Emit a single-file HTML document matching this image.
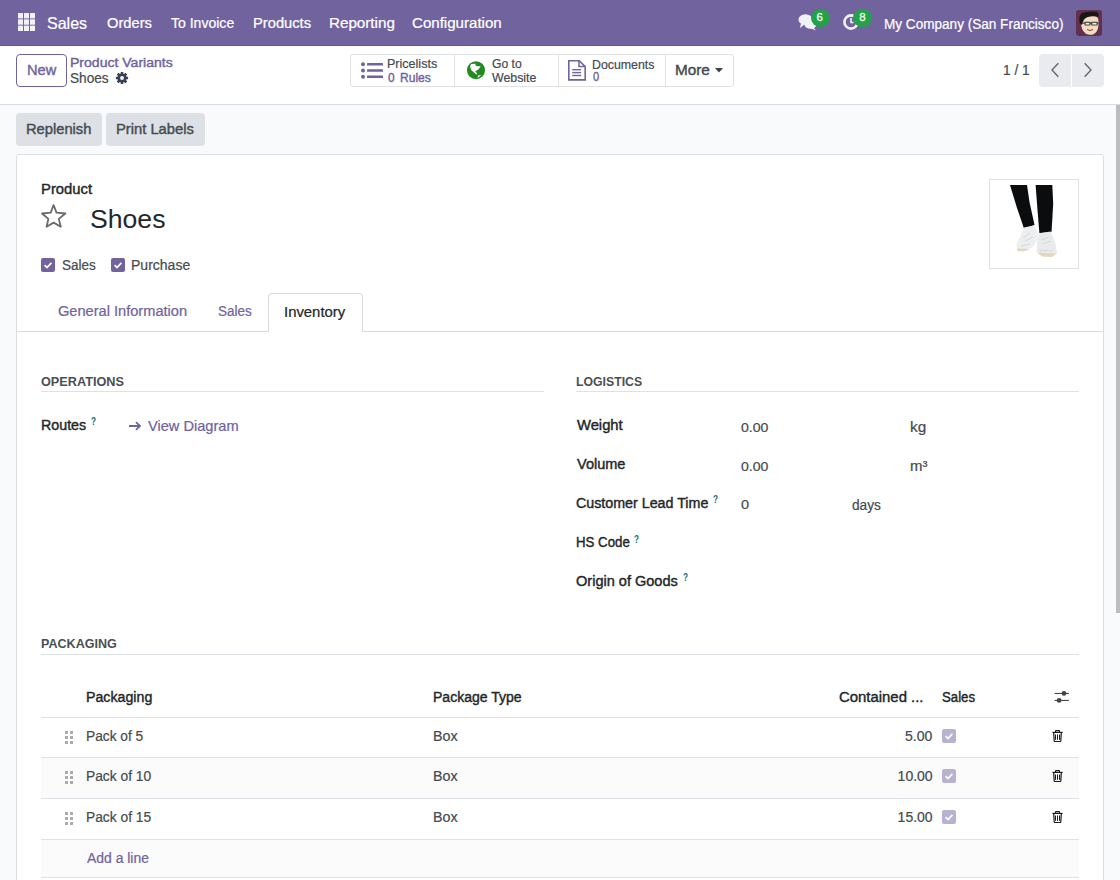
<!DOCTYPE html>
<html><head><meta charset="utf-8">
<style>
*{box-sizing:border-box;margin:0;padding:0}
html,body{width:1120px;height:880px;overflow:hidden;background:#f9fafb;font-family:"Liberation Sans",sans-serif;}
.t{position:absolute;line-height:1;white-space:nowrap;}
.a{position:absolute;}
#nav{left:0;top:0;width:1120px;height:46px;background:#71639e;}
#cp{left:0;top:46px;width:1120px;height:59px;background:#fff;border-bottom:1px solid #d8dadd;}
#btnnew{left:16px;top:54px;width:51px;height:33px;border:1px solid #71639e;border-radius:4px;background:#fff;}
#smart{left:350px;top:54px;width:384px;height:33px;border:1px solid #e0e2e5;border-radius:3px;background:#fff;}
.vdiv{position:absolute;top:55px;width:1px;height:31px;background:#e0e2e5;}
#pg1{left:1039px;top:54px;width:32px;height:33px;background:#e9ebee;border-radius:4px 0 0 4px;}
#pg2{left:1072px;top:54px;width:32px;height:33px;background:#e9ebee;border-radius:0 4px 4px 0;}
.gbtn{position:absolute;top:113px;height:33px;background:#dde1e5;border-radius:4px;}
#card{left:16px;top:154px;width:1088px;height:760px;background:#fff;border:1px solid #dcdee2;border-radius:3px;}
#scroll{left:1116px;top:105px;width:4px;height:508px;background:#bcbdbf;}
.hl{position:absolute;height:1px;background:#d8dadd;}
.hr{position:absolute;height:1px;background:#dee2e6;}
.cbx{position:absolute;width:14px;height:14px;border-radius:2px;background:#71639e;}
.cbd{position:absolute;width:14px;height:14px;border-radius:2px;background:#b9b1d0;}
.q{position:absolute;font-size:10.5px;line-height:1;color:#11707f;font-weight:700;transform:scaleX(0.78);transform-origin:0 0;}
</style></head><body>
<div class="a" id="nav"></div>
<div class="a" style="left:0;top:45px;width:1120px;height:1px;background:#62558e;"></div>
<!-- app grid icon -->
<svg class="a" style="left:18px;top:13px" width="18" height="19" viewBox="0 0 18 19"><g fill="#f3f1f8"><rect x="0" y="0.0" width="5" height="5.4"/><rect x="6" y="0.0" width="5" height="5.4"/><rect x="12" y="0.0" width="5" height="5.4"/><rect x="0" y="6.3" width="5" height="5.4"/><rect x="6" y="6.3" width="5" height="5.4"/><rect x="12" y="6.3" width="5" height="5.4"/><rect x="0" y="12.6" width="5" height="5.4"/><rect x="6" y="12.6" width="5" height="5.4"/><rect x="12" y="12.6" width="5" height="5.4"/></g></svg>
<!-- chat icon -->
<svg class="a" style="left:798px;top:13px" width="20" height="18" viewBox="0 0 20 18">
<g fill="#f3f1f8">
<ellipse cx="7.5" cy="6.5" rx="7" ry="5.3"/>
<path d="M3 10 L2 15 L7 11 Z"/>
<ellipse cx="12.5" cy="11.5" rx="6" ry="4.3"/>
<path d="M15 14 L18 17.5 L12 15 Z"/>
</g></svg>
<div class="a" style="left:811px;top:9px;width:19px;height:18px;border-radius:9px;background:#24a249;"></div>
<div class="t" style="left:816.6px;top:12.3px;font-size:11.5px;font-weight:400;-webkit-text-stroke:0.3px #f0fff0;color:#f0fff0;">6</div>
<!-- activity icon -->
<svg class="a" style="left:843px;top:13px" width="18" height="18" viewBox="0 0 18 18">
<circle cx="8" cy="9" r="6.6" fill="none" stroke="#f3f1f8" stroke-width="2.6"/>
<path d="M8 5 V9.5 H10.5" fill="none" stroke="#f3f1f8" stroke-width="1.6"/>
</svg>
<div class="a" style="left:853px;top:9px;width:19px;height:18px;border-radius:9px;background:#24a249;"></div>
<div class="t" style="left:859.2px;top:12.3px;font-size:11.5px;font-weight:400;-webkit-text-stroke:0.3px #f0fff0;color:#f0fff0;">8</div>
<!-- avatar -->
<svg class="a" style="left:1076px;top:10px" width="26" height="26" viewBox="0 0 26 26">
<rect x="0" y="0" width="26" height="26" rx="3" fill="#62304c"/>
<path d="M5 12 Q4.5 7 7 6 L20 6 Q23 8 22.5 14 Q22.5 22 17 24.5 Q13 25.5 9.5 23.5 Q5 20 5 12 Z" fill="#f5dcc0"/>
<path d="M3.5 13 Q2.5 5 6 3 Q13 0.5 21 2 Q23.5 3 22 7 Q17 5.5 12 7 Q8 8 7 12 L6 15 Z" fill="#171717"/>
<g fill="#3a3a36"><rect x="8.5" y="11.8" width="6" height="3.8" rx="0.8"/><rect x="15.2" y="11.8" width="6.5" height="3.8" rx="0.8"/><rect x="6.5" y="12.5" width="16" height="1.2"/></g>
<rect x="9.6" y="12.8" width="3.8" height="1.8" fill="#e8e8e8"/><rect x="16.3" y="12.8" width="4.3" height="1.8" fill="#e8e8e8"/>
<path d="M11 19.5 Q14 21.5 17 19.5" fill="none" stroke="#5a3a30" stroke-width="0.9"/>
</svg>

<div class="a" id="cp"></div>
<div class="a" id="btnnew"></div>
<div class="a" id="smart"></div>
<div class="vdiv" style="left:454px"></div>
<div class="vdiv" style="left:558px"></div>
<div class="vdiv" style="left:665px"></div>
<!-- gear -->
<svg class="a" style="left:115px;top:71px" width="14" height="14" viewBox="0 0 14 14">
<g fill="#374151">
<circle cx="7" cy="7" r="4.6"/>
<rect x="5.7" y="0.9" width="2.6" height="12.2" rx="0.4"/>
<rect x="5.7" y="0.9" width="2.6" height="12.2" rx="0.4" transform="rotate(45 7 7)"/>
<rect x="5.7" y="0.9" width="2.6" height="12.2" rx="0.4" transform="rotate(90 7 7)"/>
<rect x="5.7" y="0.9" width="2.6" height="12.2" rx="0.4" transform="rotate(135 7 7)"/>
</g>
<circle cx="7" cy="7" r="1.9" fill="#fff"/>
</svg>
<!-- list icon -->
<svg class="a" style="left:361px;top:62px" width="22" height="17" viewBox="0 0 22 17">
<g fill="#71639e">
<circle cx="2" cy="2.2" r="2"/><circle cx="2" cy="8.5" r="2"/><circle cx="2" cy="14.8" r="2"/>
<rect x="6" y="1" width="16" height="2.6" rx="0.5"/><rect x="6" y="7.2" width="16" height="2.6" rx="0.5"/><rect x="6" y="13.5" width="16" height="2.6" rx="0.5"/>
</g></svg>
<!-- globe -->
<svg class="a" style="left:466px;top:61px" width="20" height="19" viewBox="0 0 20 19">
<circle cx="10" cy="9.2" r="9" fill="#218b22"/>
<path d="M4 5.2 L5.2 3.1 L9.8 2.7 L9.2 4.3 L11.3 5.2 L14.7 5.2 L12.6 8.3 L9.2 10.4 L11.3 12.6 L10.4 13.5 L5.2 8.9 Z" fill="#fff"/>
<path d="M12 14.4 L15.3 14.1 L11.6 16.9 Z" fill="#fff"/>
</svg>
<!-- document icon -->
<svg class="a" style="left:567px;top:59px" width="20" height="23" viewBox="0 0 20 23">
<path d="M1.8 1.8 H12.3 L18.2 7.7 V20.9 H1.8 Z" fill="none" stroke="#71639e" stroke-width="1.6" stroke-linejoin="miter"/>
<path d="M12 2 V7.4 H18" fill="none" stroke="#71639e" stroke-width="1.5"/>
<rect x="5.2" y="10" width="8.9" height="1.4" fill="#71639e"/>
<rect x="5.2" y="12.9" width="8.9" height="1.4" fill="#71639e"/>
<rect x="5.2" y="15.8" width="8.9" height="1.4" fill="#71639e"/>
</svg>
<!-- caret -->
<svg class="a" style="left:715px;top:68px" width="8" height="5" viewBox="0 0 8 5"><path d="M0 0 H8 L4 4.5 Z" fill="#374151"/></svg>
<div class="a" id="pg1"></div>
<div class="a" id="pg2"></div>
<svg class="a" style="left:1050px;top:62px" width="10" height="16" viewBox="0 0 10 16"><path d="M8.3 1.2 L2 8 L8.3 14.8" fill="none" stroke="#5f6670" stroke-width="1.35"/></svg>
<svg class="a" style="left:1083px;top:62px" width="10" height="16" viewBox="0 0 10 16"><path d="M1.7 1.2 L8 8 L1.7 14.8" fill="none" stroke="#5f6670" stroke-width="1.35"/></svg>

<div class="a" id="scroll"></div>
<div class="gbtn" style="left:16px;width:86px"></div>
<div class="gbtn" style="left:106px;width:99px"></div>

<div class="a" id="card"></div>
<!-- star -->
<svg class="a" style="left:40px;top:203px" width="27" height="27" viewBox="0 0 27 27">
<path d="M13.6 2 L16.5 9.6 L25.4 10.5 L18.8 15.9 L20.8 23.7 L13.6 19.6 L6.6 23.7 L8.4 15.9 L2 10.5 L10.7 9.6 Z" fill="none" stroke="#6a6a6a" stroke-width="1.8" stroke-linejoin="round"/>
</svg>
<div class="cbx" style="left:41px;top:258px"></div>
<div class="cbx" style="left:111px;top:258px"></div>
<svg class="a" style="left:41px;top:258px" width="14" height="14" viewBox="0 0 14 14"><path d="M3.6 7.2 L6 9.5 L10.4 4.8" fill="none" stroke="#fff" stroke-width="1.7"/></svg>
<svg class="a" style="left:111px;top:258px" width="14" height="14" viewBox="0 0 14 14"><path d="M3.6 7.2 L6 9.5 L10.4 4.8" fill="none" stroke="#fff" stroke-width="1.7"/></svg>

<!-- product image -->
<div class="a" style="left:989px;top:179px;width:90px;height:90px;border:1px solid #dee2e6;background:#fff;"></div>
<svg class="a" style="left:990px;top:180px" width="88" height="88" viewBox="0 0 88 88">
<path d="M20 5 L37 5 L39.5 22 L44.5 45 L34 48.5 L27 28 Z" fill="#0b0c0e"/>
<path d="M45.6 5 L62.3 5 L63.2 24 L61.5 52 L49.4 53 L47.5 30 Z" fill="#0b0c0e"/>
<path d="M34 47.5 L44 45.5 L47 51 L48 59 L43 67 L34 70.5 L27 70 L26.5 64 L30 57 Z" fill="#eceef0"/>
<path d="M49 53.5 L60.5 51.5 L63 57 L66 66 L67 73.5 L62 76.5 L52 76 L46.5 72 L47 63 Z" fill="#e9ebed"/>
<path d="M27 68.5 L40 69 L34 71.5 L27.5 71 Z" fill="#e3d8bd"/>
<path d="M47 72.5 L66.5 73.5 L62 77 L52 76.5 Z" fill="#e3d8bd"/>
<path d="M33 58 L40 53 M35 61 L43 57 M31 66 L40 64" stroke="#cfd2d6" stroke-width="0.8" fill="none"/>
<path d="M51 60 L59 57 M52 64 L61 61 M49 70 L63 71" stroke="#cfd2d6" stroke-width="0.8" fill="none"/>
</svg>

<!-- tabs -->
<div class="hl" style="left:17px;top:331px;width:1086px;"></div>
<div class="a" style="left:268px;top:293px;width:95px;height:39px;background:#fff;border:1px solid #d8dadd;border-bottom:none;border-radius:4px 4px 0 0;"></div>

<div class="hr" style="left:41px;top:391px;width:503px;"></div>
<div class="hr" style="left:576px;top:391px;width:503px;"></div>
<div class="q" style="left:90.8px;top:415.8px;">?</div>
<svg class="a" style="left:128px;top:421px" width="14" height="10" viewBox="0 0 14 10"><path d="M1 5 H12 M8 1.2 L12 5 L8 8.8" fill="none" stroke="#71639e" stroke-width="1.8"/></svg>
<div class="q" style="left:712.5px;top:494px;">?</div>
<div class="q" style="left:634.3px;top:533.8px;">?</div>
<div class="q" style="left:682.5px;top:572.2px;">?</div>

<div class="hr" style="left:41px;top:654px;width:1038px;"></div>
<!-- table -->
<div class="a" style="left:41px;top:758px;width:1038px;height:40px;background:#fbfbfc;"></div>
<div class="a" style="left:41px;top:840px;width:1038px;height:37px;background:#fbfbfc;"></div>
<div class="hr" style="left:41px;top:717px;width:1038px;"></div>
<div class="hr" style="left:41px;top:757px;width:1038px;"></div>
<div class="hr" style="left:41px;top:798px;width:1038px;"></div>
<div class="hr" style="left:41px;top:839px;width:1038px;"></div>
<div class="hr" style="left:41px;top:877px;width:1038px;"></div>
<!-- sliders icon -->
<svg class="a" style="left:1054px;top:691px" width="15" height="12" viewBox="0 0 15 12">
<g fill="#444"><rect x="0.6" y="1.9" width="14.2" height="1.1"/><rect x="0.6" y="8.9" width="14.2" height="1.1"/>
<circle cx="10" cy="2.45" r="2.4"/><circle cx="5.1" cy="9.45" r="2.4"/></g></svg>
<!-- drag handles, checkboxes, trash -->
<svg class="a" style="left:64px;top:731px" width="10" height="14" viewBox="0 0 10 14"><g fill="#a9abae"><rect x="1" y="0" width="3" height="3"/><rect x="6" y="0" width="3" height="3"/><rect x="1" y="5" width="3" height="3"/><rect x="6" y="5" width="3" height="3"/><rect x="1" y="10" width="3" height="3"/><rect x="6" y="10" width="3" height="3"/></g></svg>
<svg class="a" style="left:64px;top:771px" width="10" height="14" viewBox="0 0 10 14"><g fill="#a9abae"><rect x="1" y="0" width="3" height="3"/><rect x="6" y="0" width="3" height="3"/><rect x="1" y="5" width="3" height="3"/><rect x="6" y="5" width="3" height="3"/><rect x="1" y="10" width="3" height="3"/><rect x="6" y="10" width="3" height="3"/></g></svg>
<svg class="a" style="left:64px;top:812px" width="10" height="14" viewBox="0 0 10 14"><g fill="#a9abae"><rect x="1" y="0" width="3" height="3"/><rect x="6" y="0" width="3" height="3"/><rect x="1" y="5" width="3" height="3"/><rect x="6" y="5" width="3" height="3"/><rect x="1" y="10" width="3" height="3"/><rect x="6" y="10" width="3" height="3"/></g></svg>
<div class="cbd" style="left:942px;top:729px"></div>
<div class="cbd" style="left:942px;top:769px"></div>
<div class="cbd" style="left:942px;top:810px"></div>
<svg class="a" style="left:942px;top:729px" width="14" height="14" viewBox="0 0 14 14"><path d="M3.6 7.2 L6 9.5 L10.4 4.8" fill="none" stroke="#fff" stroke-width="1.7"/></svg>
<svg class="a" style="left:942px;top:769px" width="14" height="14" viewBox="0 0 14 14"><path d="M3.6 7.2 L6 9.5 L10.4 4.8" fill="none" stroke="#fff" stroke-width="1.7"/></svg>
<svg class="a" style="left:942px;top:810px" width="14" height="14" viewBox="0 0 14 14"><path d="M3.6 7.2 L6 9.5 L10.4 4.8" fill="none" stroke="#fff" stroke-width="1.7"/></svg>
<svg class="a" style="left:1052px;top:730px" width="11" height="12" viewBox="0 0 11 12"><g fill="none" stroke="#1a1a1a"><path d="M0.4 2.4 H10.6" stroke-width="1.2"/><path d="M3.5 2.2 V1.1 Q3.5 0.6 4.1 0.6 H6.9 Q7.5 0.6 7.5 1.1 V2.2" stroke-width="1.1"/><path d="M1.7 2.9 L2.2 11 Q2.3 11.5 2.8 11.5 H8.2 Q8.7 11.5 8.8 11 L9.3 2.9" stroke-width="1.2"/><path d="M3.5 4.5 V9.8 M5.5 4.5 V9.8 M7.5 4.5 V9.8" stroke-width="1"/></g></svg>
<svg class="a" style="left:1052px;top:770px" width="11" height="12" viewBox="0 0 11 12"><g fill="none" stroke="#1a1a1a"><path d="M0.4 2.4 H10.6" stroke-width="1.2"/><path d="M3.5 2.2 V1.1 Q3.5 0.6 4.1 0.6 H6.9 Q7.5 0.6 7.5 1.1 V2.2" stroke-width="1.1"/><path d="M1.7 2.9 L2.2 11 Q2.3 11.5 2.8 11.5 H8.2 Q8.7 11.5 8.8 11 L9.3 2.9" stroke-width="1.2"/><path d="M3.5 4.5 V9.8 M5.5 4.5 V9.8 M7.5 4.5 V9.8" stroke-width="1"/></g></svg>
<svg class="a" style="left:1052px;top:811px" width="11" height="12" viewBox="0 0 11 12"><g fill="none" stroke="#1a1a1a"><path d="M0.4 2.4 H10.6" stroke-width="1.2"/><path d="M3.5 2.2 V1.1 Q3.5 0.6 4.1 0.6 H6.9 Q7.5 0.6 7.5 1.1 V2.2" stroke-width="1.1"/><path d="M1.7 2.9 L2.2 11 Q2.3 11.5 2.8 11.5 H8.2 Q8.7 11.5 8.8 11 L9.3 2.9" stroke-width="1.2"/><path d="M3.5 4.5 V9.8 M5.5 4.5 V9.8 M7.5 4.5 V9.8" stroke-width="1"/></g></svg>

<div class="t" id="brand" style="top:15.09px;font-size:16.5px;font-weight:400;-webkit-text-stroke:0.22px #ffffff;color:#ffffff;left:46.82px;transform:scaleX(0.9721);transform-origin:0 0;">Sales</div>
<div class="t" id="m1" style="top:16.35px;font-size:14px;font-weight:400;-webkit-text-stroke:0.22px #ffffff;color:#ffffff;left:106.51px;transform:scaleX(1.0512);transform-origin:0 0;">Orders</div>
<div class="t" id="m2" style="top:16.35px;font-size:14px;font-weight:400;-webkit-text-stroke:0.22px #ffffff;color:#ffffff;left:170.81px;transform:scaleX(1.0023);transform-origin:0 0;">To Invoice</div>
<div class="t" id="m3" style="top:16.35px;font-size:14px;font-weight:400;-webkit-text-stroke:0.22px #ffffff;color:#ffffff;left:252.58px;transform:scaleX(1.0503);transform-origin:0 0;">Products</div>
<div class="t" id="m4" style="top:16.35px;font-size:14px;font-weight:400;-webkit-text-stroke:0.22px #ffffff;color:#ffffff;left:328.50px;transform:scaleX(1.0849);transform-origin:0 0;">Reporting</div>
<div class="t" id="m5" style="top:16.35px;font-size:14px;font-weight:400;-webkit-text-stroke:0.22px #ffffff;color:#ffffff;left:412.09px;transform:scaleX(1.0775);transform-origin:0 0;">Configuration</div>
<div class="t" id="comp" style="top:17.05px;font-size:14px;font-weight:400;-webkit-text-stroke:0.22px #ffffff;color:#ffffff;left:884.09px;transform:scaleX(0.9691);transform-origin:0 0;">My Company (San Francisco)</div>
<div class="t" id="new" style="top:63.15px;font-size:14px;font-weight:400;-webkit-text-stroke:0.4px #71639e;color:#71639e;left:26.60px;transform:scaleX(1.0437);transform-origin:0 0;">New</div>
<div class="t" id="bc1" style="top:56.82px;font-size:12.5px;font-weight:400;-webkit-text-stroke:0.4px #71639e;color:#71639e;left:70.13px;transform:scaleX(1.1226);transform-origin:0 0;">Product Variants</div>
<div class="t" id="bc2" style="top:70.75px;font-size:14px;font-weight:400;-webkit-text-stroke:0.22px #454b52;color:#454b52;left:70.30px;transform:scaleX(0.9726);transform-origin:0 0;">Shoes</div>
<div class="t" id="pl1" style="top:56.60px;font-size:13px;font-weight:400;-webkit-text-stroke:0.22px #454b52;color:#454b52;left:387.16px;transform:scaleX(0.9646);transform-origin:0 0;">Pricelists</div>
<div class="t" id="pl2" style="top:71.30px;font-size:13px;font-weight:400;-webkit-text-stroke:0.4px #71639e;color:#71639e;left:387.52px;transform:scaleX(0.9118);transform-origin:0 0;">0</div>
<div class="t" id="pl3" style="top:71.30px;font-size:13px;font-weight:400;-webkit-text-stroke:0.4px #71639e;color:#71639e;left:399.54px;transform:scaleX(0.9261);transform-origin:0 0;">Rules</div>
<div class="t" id="gw1" style="top:56.60px;font-size:13px;font-weight:400;-webkit-text-stroke:0.22px #454b52;color:#454b52;left:491.83px;transform:scaleX(0.9338);transform-origin:0 0;">Go to</div>
<div class="t" id="gw2" style="top:71.30px;font-size:13px;font-weight:400;-webkit-text-stroke:0.22px #454b52;color:#454b52;left:492.15px;transform:scaleX(0.9489);transform-origin:0 0;">Website</div>
<div class="t" id="dc1" style="top:57.60px;font-size:13px;font-weight:400;-webkit-text-stroke:0.22px #454b52;color:#454b52;left:592.30px;transform:scaleX(0.9487);transform-origin:0 0;">Documents</div>
<div class="t" id="dc2" style="top:70.40px;font-size:13px;font-weight:400;-webkit-text-stroke:0.4px #71639e;color:#71639e;left:593.02px;transform:scaleX(0.8515);transform-origin:0 0;">0</div>
<div class="t" id="more" style="top:63.15px;font-size:14px;font-weight:400;-webkit-text-stroke:0.4px #454b52;color:#454b52;left:675.36px;transform:scaleX(1.0907);transform-origin:0 0;">More</div>
<div class="t" id="pager" style="top:63.15px;font-size:14px;font-weight:400;-webkit-text-stroke:0.22px #454b52;color:#454b52;left:1003.27px;transform:scaleX(0.9761);transform-origin:0 0;">1 / 1</div>
<div class="t" id="rep" style="top:121.95px;font-size:14px;font-weight:400;-webkit-text-stroke:0.4px #454b52;color:#454b52;left:26.29px;transform:scaleX(1.0497);transform-origin:0 0;">Replenish</div>
<div class="t" id="prt" style="top:121.95px;font-size:14px;font-weight:400;-webkit-text-stroke:0.4px #454b52;color:#454b52;left:116.40px;transform:scaleX(1.0533);transform-origin:0 0;">Print Labels</div>
<div class="t" id="prod" style="top:182.15px;font-size:14px;font-weight:400;-webkit-text-stroke:0.4px #23272b;color:#23272b;left:40.54px;transform:scaleX(1.0583);transform-origin:0 0;">Product</div>
<div class="t" id="title" style="top:206.47px;font-size:26.5px;font-weight:400;color:#23272b;left:89.59px;transform:scaleX(1.0047);transform-origin:0 0;">Shoes</div>
<div class="t" id="cb1" style="top:258.05px;font-size:14px;font-weight:400;-webkit-text-stroke:0.22px #454b52;color:#454b52;left:61.70px;transform:scaleX(0.9652);transform-origin:0 0;">Sales</div>
<div class="t" id="cb2" style="top:258.05px;font-size:14px;font-weight:400;-webkit-text-stroke:0.22px #454b52;color:#454b52;left:131.18px;transform:scaleX(1.0008);transform-origin:0 0;">Purchase</div>
<div class="t" id="tab1" style="top:304.45px;font-size:14px;font-weight:400;-webkit-text-stroke:0.22px #71639e;color:#71639e;left:57.83px;transform:scaleX(1.0430);transform-origin:0 0;">General Information</div>
<div class="t" id="tab2" style="top:304.45px;font-size:14px;font-weight:400;-webkit-text-stroke:0.22px #71639e;color:#71639e;left:218.48px;transform:scaleX(0.9607);transform-origin:0 0;">Sales</div>
<div class="t" id="tab3" style="top:305.35px;font-size:14px;font-weight:400;-webkit-text-stroke:0.22px #23272b;color:#23272b;left:284.46px;transform:scaleX(1.0628);transform-origin:0 0;">Inventory</div>
<div class="t" id="sec1" style="top:376.42px;font-size:12.5px;font-weight:700;color:#4a4f56;left:41.24px;transform:scaleX(1.0152);transform-origin:0 0;">OPERATIONS</div>
<div class="t" id="sec2" style="top:376.42px;font-size:12.5px;font-weight:700;color:#4a4f56;left:575.78px;transform:scaleX(0.9816);transform-origin:0 0;">LOGISTICS</div>
<div class="t" id="routes" style="top:417.85px;font-size:14px;font-weight:400;-webkit-text-stroke:0.4px #23272b;color:#23272b;left:40.89px;transform:scaleX(1.0174);transform-origin:0 0;">Routes</div>
<div class="t" id="vd" style="top:418.93px;font-size:14.5px;font-weight:400;-webkit-text-stroke:0.22px #71639e;color:#71639e;left:148.43px;transform:scaleX(1.0069);transform-origin:0 0;">View Diagram</div>
<div class="t" id="wt" style="top:417.85px;font-size:14px;font-weight:400;-webkit-text-stroke:0.4px #23272b;color:#23272b;left:576.66px;transform:scaleX(1.0542);transform-origin:0 0;">Weight</div>
<div class="t" id="wtv" style="top:420.70px;font-size:13px;font-weight:400;-webkit-text-stroke:0.22px #454b52;color:#454b52;left:740.98px;transform:scaleX(1.0828);transform-origin:0 0;">0.00</div>
<div class="t" id="kg" style="top:420.15px;font-size:14px;font-weight:400;-webkit-text-stroke:0.22px #454b52;color:#454b52;left:910.14px;transform:scaleX(1.0925);transform-origin:0 0;">kg</div>
<div class="t" id="vol" style="top:456.85px;font-size:14px;font-weight:400;-webkit-text-stroke:0.4px #23272b;color:#23272b;left:576.89px;transform:scaleX(1.0375);transform-origin:0 0;">Volume</div>
<div class="t" id="volv" style="top:459.60px;font-size:13px;font-weight:400;-webkit-text-stroke:0.22px #454b52;color:#454b52;left:741.21px;transform:scaleX(1.0794);transform-origin:0 0;">0.00</div>
<div class="t" id="m3u" style="top:459.15px;font-size:14px;font-weight:400;-webkit-text-stroke:0.22px #454b52;color:#454b52;left:910.13px;transform:scaleX(1.0695);transform-origin:0 0;">m³</div>
<div class="t" id="clt" style="top:496.15px;font-size:14px;font-weight:400;-webkit-text-stroke:0.4px #23272b;color:#23272b;left:576.19px;transform:scaleX(1.0182);transform-origin:0 0;">Customer Lead Time</div>
<div class="t" id="cltv" style="top:498.30px;font-size:13px;font-weight:400;-webkit-text-stroke:0.22px #454b52;color:#454b52;left:741.19px;transform:scaleX(1.1164);transform-origin:0 0;">0</div>
<div class="t" id="days" style="top:497.65px;font-size:14px;font-weight:400;-webkit-text-stroke:0.22px #454b52;color:#454b52;left:852.41px;transform:scaleX(0.9761);transform-origin:0 0;">days</div>
<div class="t" id="hs" style="top:535.05px;font-size:14px;font-weight:400;-webkit-text-stroke:0.4px #23272b;color:#23272b;left:575.99px;transform:scaleX(0.9462);transform-origin:0 0;">HS Code</div>
<div class="t" id="og" style="top:573.75px;font-size:14px;font-weight:400;-webkit-text-stroke:0.4px #23272b;color:#23272b;left:576.22px;transform:scaleX(1.0382);transform-origin:0 0;">Origin of Goods</div>
<div class="t" id="sec3" style="top:638.42px;font-size:12.5px;font-weight:700;color:#4a4f56;left:40.97px;transform:scaleX(1.0040);transform-origin:0 0;">PACKAGING</div>
<div class="t" id="th1" style="top:689.85px;font-size:14px;font-weight:400;-webkit-text-stroke:0.4px #23272b;color:#23272b;left:85.69px;transform:scaleX(1.0137);transform-origin:0 0;">Packaging</div>
<div class="t" id="th2" style="top:689.95px;font-size:14px;font-weight:400;-webkit-text-stroke:0.4px #23272b;color:#23272b;left:432.70px;transform:scaleX(1.0019);transform-origin:0 0;">Package Type</div>
<div class="t" id="th3" style="top:690.15px;font-size:14px;font-weight:400;-webkit-text-stroke:0.4px #23272b;color:#23272b;left:839.48px;transform:scaleX(1.0646);transform-origin:0 0;">Contained ...</div>
<div class="t" id="th4" style="top:690.15px;font-size:14px;font-weight:400;-webkit-text-stroke:0.4px #23272b;color:#23272b;left:942.40px;transform:scaleX(0.9438);transform-origin:0 0;">Sales</div>
<div class="t" id="r1a" style="top:729.15px;font-size:14px;font-weight:400;-webkit-text-stroke:0.22px #454b52;color:#454b52;left:85.61px;transform:scaleX(0.9801);transform-origin:0 0;">Pack of 5</div>
<div class="t" id="r1b" style="top:728.65px;font-size:14px;font-weight:400;-webkit-text-stroke:0.22px #454b52;color:#454b52;left:432.57px;transform:scaleX(1.0200);transform-origin:0 0;">Box</div>
<div class="t" id="r1c" style="top:728.95px;font-size:14px;font-weight:400;-webkit-text-stroke:0.22px #454b52;color:#454b52;left:905.44px;transform:scaleX(1.0003);transform-origin:0 0;">5.00</div>
<div class="t" id="r2a" style="top:769.15px;font-size:14px;font-weight:400;-webkit-text-stroke:0.22px #454b52;color:#454b52;left:85.60px;transform:scaleX(0.9849);transform-origin:0 0;">Pack of 10</div>
<div class="t" id="r2b" style="top:769.15px;font-size:14px;font-weight:400;-webkit-text-stroke:0.22px #454b52;color:#454b52;left:432.57px;transform:scaleX(1.0200);transform-origin:0 0;">Box</div>
<div class="t" id="r2c" style="top:769.15px;font-size:14px;font-weight:400;-webkit-text-stroke:0.22px #454b52;color:#454b52;right:187.36px;">10.00</div>
<div class="t" id="r3a" style="top:810.25px;font-size:14px;font-weight:400;-webkit-text-stroke:0.22px #454b52;color:#454b52;left:85.60px;transform:scaleX(0.9853);transform-origin:0 0;">Pack of 15</div>
<div class="t" id="r3b" style="top:810.25px;font-size:14px;font-weight:400;-webkit-text-stroke:0.22px #454b52;color:#454b52;left:432.57px;transform:scaleX(1.0200);transform-origin:0 0;">Box</div>
<div class="t" id="r3c" style="top:810.25px;font-size:14px;font-weight:400;-webkit-text-stroke:0.22px #454b52;color:#454b52;right:187.36px;">15.00</div>
<div class="t" id="add" style="top:851.15px;font-size:14px;font-weight:400;-webkit-text-stroke:0.22px #71639e;color:#71639e;left:86.53px;transform:scaleX(0.9947);transform-origin:0 0;">Add a line</div>
</body></html>
